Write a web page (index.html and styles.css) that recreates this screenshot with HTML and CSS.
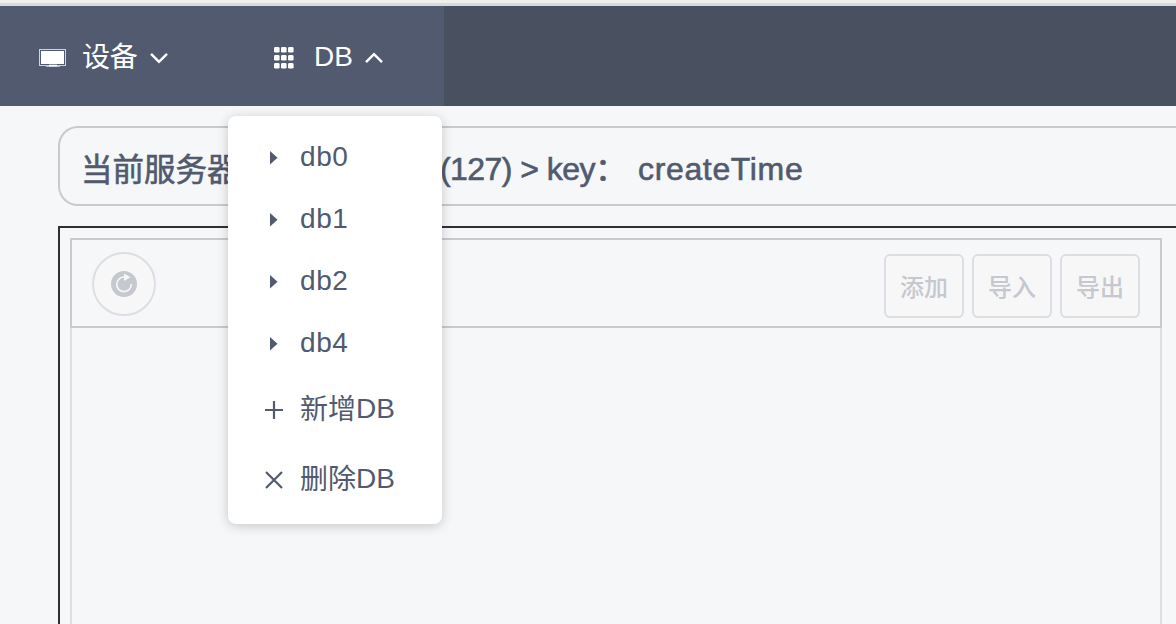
FILE: index.html
```html
<!DOCTYPE html>
<html lang="zh-CN">
<head>
<meta charset="utf-8">
<title>DB</title>
<link rel="stylesheet" href="styles.css">
</head>
<body>
<nav class="navbar">
  <div class="nav-item nav-device">
    <svg class="icon-monitor" width="28" height="20" viewBox="0 0 28 20"><rect x=".5" y=".5" width="26" height="16" fill="none" stroke="#cfd3db"/><rect x="2" y="2" width="23" height="13" fill="#fff"/><path d="M7 17.3h14" stroke="#b9bec8" stroke-width="1.4"/><path d="M10 16.5h8" stroke="#fff" stroke-width="1.6"/></svg>
    <span class="nav-label nav-label-zh">设备</span>
    <svg class="chevron" width="20" height="14" viewBox="0 0 20 14"><path d="M2 2.8l8 8 8-8" fill="none" stroke="#fff" stroke-width="2.5"/></svg>
  </div>
  <div class="nav-item nav-db">
    <svg class="icon-grid" width="20" height="22" viewBox="0 0 20 22" fill="#fff"><rect width="5.6" height="5.6" rx="1.4"/><rect x="7" width="5.6" height="5.6" rx="1.4"/><rect x="14" width="5.6" height="5.6" rx="1.4"/><rect y="8" width="5.6" height="5.6" rx="1.4"/><rect x="7" y="8" width="5.6" height="5.6" rx="1.4"/><rect x="14" y="8" width="5.6" height="5.6" rx="1.4"/><rect y="16" width="5.6" height="5.6" rx="1.4"/><rect x="7" y="16" width="5.6" height="5.6" rx="1.4"/><rect x="14" y="16" width="5.6" height="5.6" rx="1.4"/></svg>
    <span class="nav-label">DB</span>
    <svg class="chevron" width="20" height="14" viewBox="0 0 20 14"><path d="M2 11.2l8-8 8 8" fill="none" stroke="#fff" stroke-width="2.5"/></svg>
    <ul class="menu">
      <li class="menu-item"><svg class="menu-icon" viewBox="0 0 20 20"><path d="M6 3v13.5l7.5-6.7z" fill="#515a6e"/></svg>db0</li>
      <li class="menu-item"><svg class="menu-icon" viewBox="0 0 20 20"><path d="M6 3v13.5l7.5-6.7z" fill="#515a6e"/></svg>db1</li>
      <li class="menu-item"><svg class="menu-icon" viewBox="0 0 20 20"><path d="M6 3v13.5l7.5-6.7z" fill="#515a6e"/></svg>db2</li>
      <li class="menu-item"><svg class="menu-icon" viewBox="0 0 20 20"><path d="M6 3v13.5l7.5-6.7z" fill="#515a6e"/></svg>db4</li>
      <li class="menu-item menu-action"><svg class="menu-icon" viewBox="0 0 20 20"><path d="M1 10h18M10 1v18" stroke="#515a6e" stroke-width="2.2"/></svg><span><span class="zh">新增</span>DB</span></li>
      <li class="menu-item menu-action"><svg class="menu-icon" viewBox="0 0 20 20"><path d="M2 2l16 16M18 2L2 18" stroke="#515a6e" stroke-width="2.2"/></svg><span><span class="zh">删除</span>DB</span></li>
    </ul>
  </div>
</nav>
<main class="content">
  <div class="location"><span class="server">当前服务器</span><span class="path">(127) &gt; key：</span><span class="key">createTime</span></div>
  <section class="workspace">
    <div class="panel">
      <header class="toolbar">
        <button class="refresh" disabled><svg width="26" height="26" viewBox="0 0 26 26"><circle cx="13" cy="13" r="13" fill="#c5c8ce"/><path d="M14.2 6.1A7.3 7.3 0 1 0 20.3 13" fill="none" stroke="#f7f7f7" stroke-width="1.6"/><path d="M13 2.5v7.5l6.5-3.7z" fill="#f7f7f7"/></svg></button>
        <div class="actions">
          <button class="btn" disabled>添加</button>
          <button class="btn" disabled>导入</button>
          <button class="btn" disabled>导出</button>
        </div>
      </header>
    </div>
  </section>
</main>
</body>
</html>
```
FILE: styles.css
```css
* { box-sizing: border-box; }
body {
  display: flex;
  flex-direction: column;
  margin: 0;
  height: 624px;
  overflow: hidden;
  background: #f5f7f9;
  color: #515a6e;
  font-family: "Liberation Sans", "Noto Sans CJK SC", sans-serif;
  border-top: 3px solid #efefed;
}
.navbar {
  display: flex;
  flex: none;
  height: 103px;
  border-top: 3px solid #d5dbe0;
  background: #495060;
}
.nav-item {
  display: flex;
  align-items: center;
  height: 100px;
  background: #515a6e;
  color: #fff;
  font-size: 28px;
  line-height: 40px;
}
.nav-device { width: 228px; padding-left: 39px; }
.nav-db { position: relative; width: 216px; padding-left: 46px; }
.icon-monitor { margin: 5px 15px 0 0; }
.icon-grid { margin: 3px 20px 0 0; }
.nav-label { margin-top: 2px; }
.nav-label-zh { margin-top: 4px; letter-spacing: -.3px; }
.chevron { margin: 3px 0 0 12px; }
.nav-db .chevron { margin-left: 11px; }
.menu {
  position: absolute;
  z-index: 2;
  top: 110px;
  left: 0;
  width: 214px;
  height: 408px;
  margin: 0;
  padding: 10px 0;
  list-style: none;
  background: #fff;
  border-radius: 8px;
  box-shadow: 0 2px 12px rgba(0, 0, 0, .2);
  color: #515a6e;
}
.menu-item {
  display: flex;
  align-items: center;
  height: 62px;
  padding-left: 36px;
  letter-spacing: .6px;
}
.menu-action { height: 70px; letter-spacing: 0; }
.menu-icon { width: 20px; height: 20px; margin: 2px 16px 0 0; }
.zh { vertical-align: -1px; }
.content {
  display: flex;
  flex: 1;
  flex-direction: column;
  min-height: 0;
  padding: 20px 0 0 58px;
}
.location {
  display: flex;
  align-items: center;
  flex: none;
  height: 80px;
  padding: 6px 0 0 21px;
  border: 2px solid #c8cacc;
  border-right: 0;
  border-radius: 20px 0 0 20px;
  font-size: 32px;
  line-height: 44px;
  white-space: pre;
  -webkit-text-stroke: .6px #515a6e;
}
.server { width: 359px; padding-top: 1px; font-size: 31.5px; }
.path { width: 198px; letter-spacing: -.55px; }
.key { letter-spacing: .65px; }
.workspace {
  display: flex;
  flex: 1;
  min-height: 0;
  margin-top: 20px;
  padding: 10px 0 0 10px;
  border: 2px solid #2f3036;
  border-width: 2px 0 0 2px;
}
.panel {
  width: 1092px;
  border: 2px solid #dcdee2;
  border-width: 0 2px;
}
.toolbar {
  display: flex;
  justify-content: space-between;
  height: 90px;
  margin: 0 -2px;
  padding: 12px 20px 0;
  border: 2px solid #c8cacc;
}
.refresh {
  display: flex;
  align-items: center;
  justify-content: center;
  width: 64px;
  height: 64px;
  padding: 0;
  border: 2px solid #dcdee2;
  border-radius: 50%;
  background: #f7f7f7;
}
.actions { display: flex; gap: 8px; padding-top: 2px; }
.btn {
  width: 80px;
  height: 64px;
  padding: 0;
  border: 2px solid #dcdee2;
  border-radius: 6px;
  background: #f7f7f7;
  color: #c5c8ce;
  font: 500 24px/36px "Noto Sans CJK SC", sans-serif;
}
```
